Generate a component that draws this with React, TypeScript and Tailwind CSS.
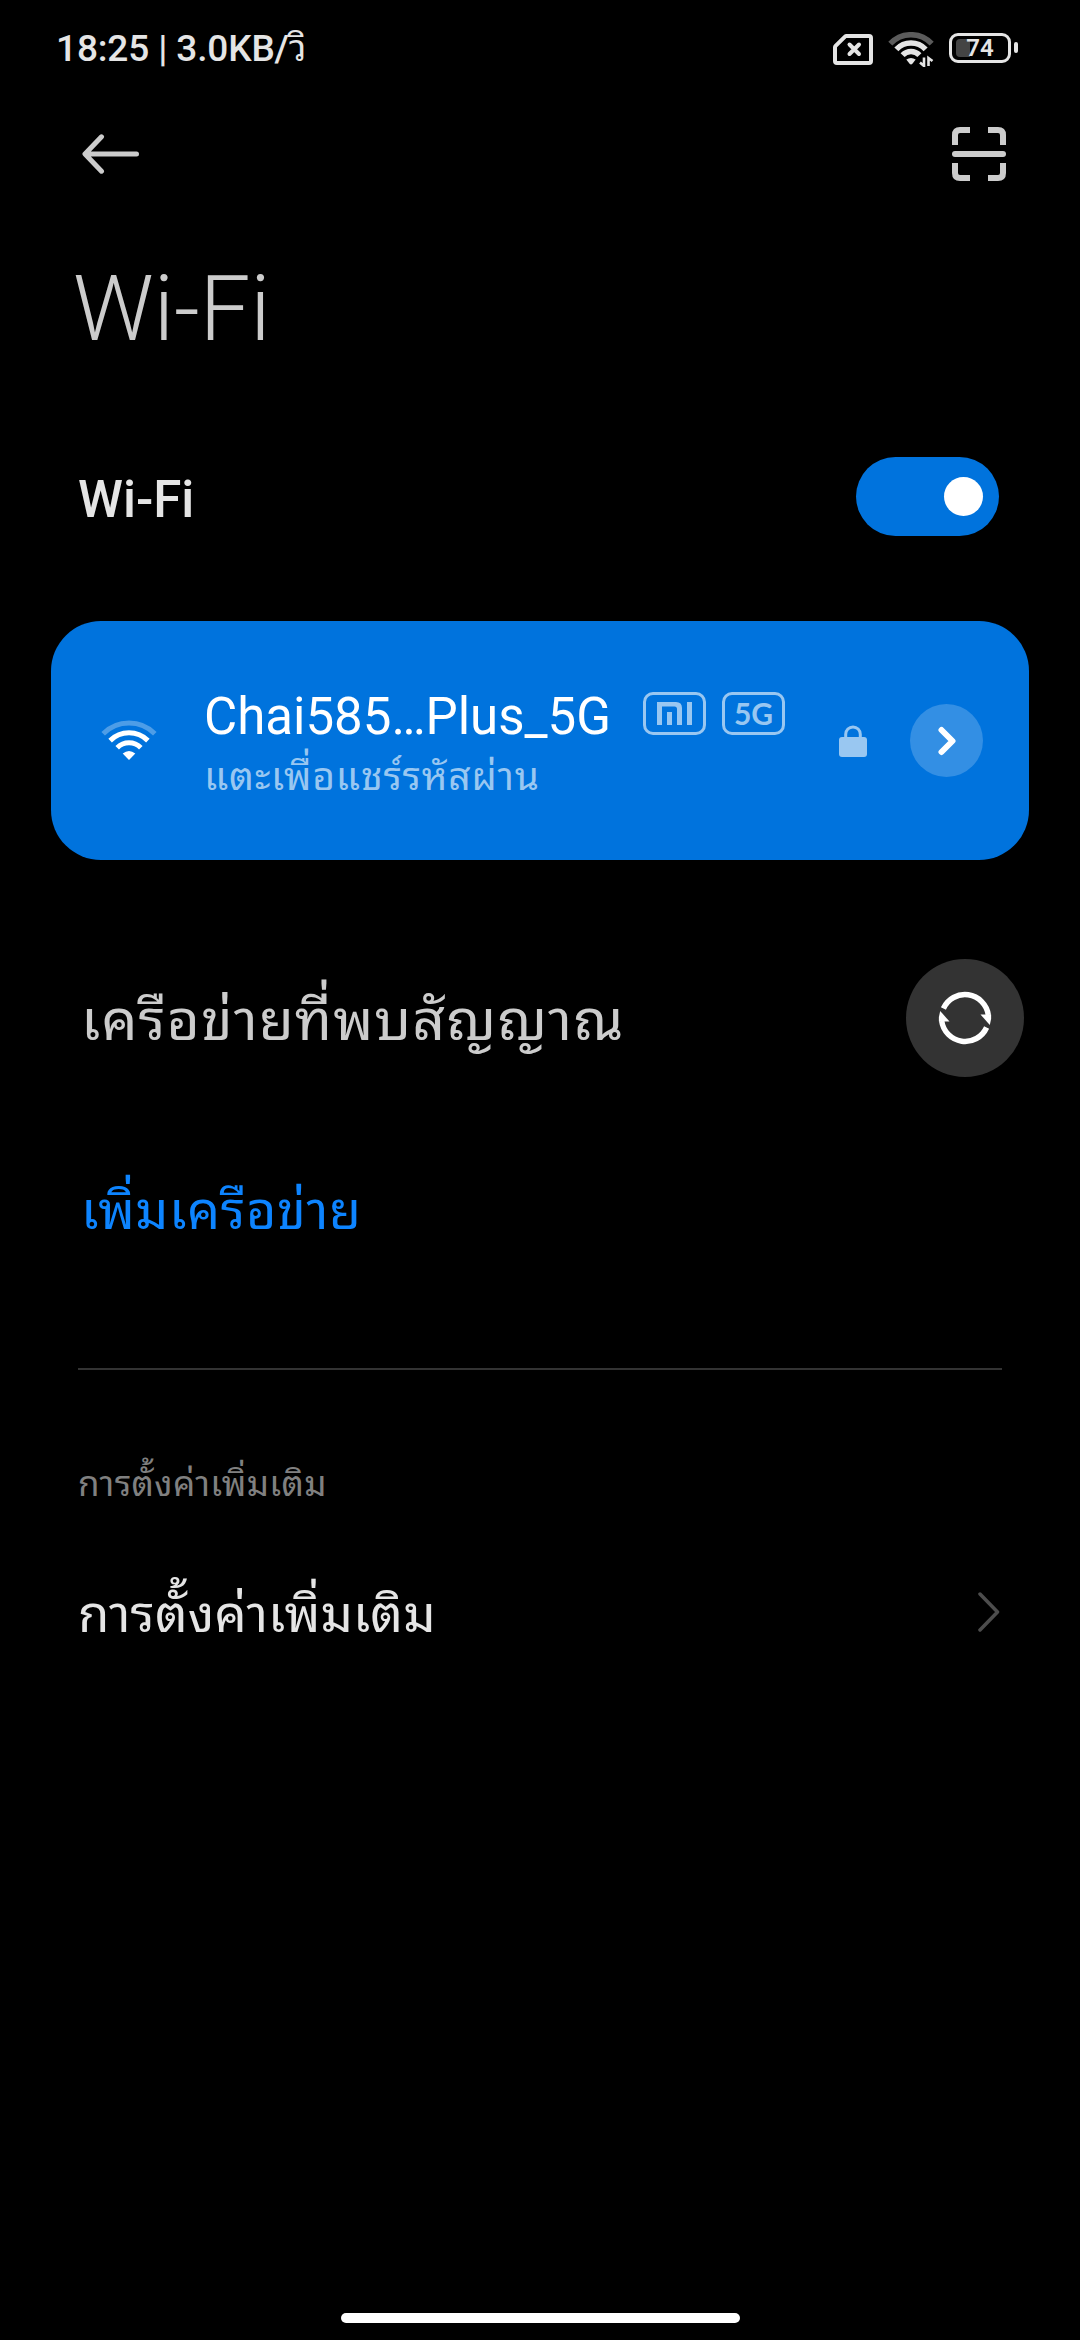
import React from 'react';

const arc = (cx: number, cy: number, r: number, deg = 45) => {
  const a = (deg * Math.PI) / 180;
  const dx = r * Math.sin(a);
  const dy = r * Math.cos(a);
  return `M${cx - dx} ${cy - dy}A${r} ${r} 0 0 1 ${cx + dx} ${cy - dy}`;
};

const SimIcon = () => (
  <svg width="40" height="31" viewBox="0 0 40 31" fill="none" stroke="#e5e5e5">
    <path d="M13.5 2H36Q38 2 38 4V27Q38 29 36 29H4Q2 29 2 27V13.2Q2 12.4 2.6 11.8L12 2.6Q12.6 2 13.5 2Z" strokeWidth="4" strokeLinejoin="round" />
    <path d="M16.5 10.5L26 20M26 10.5L16.5 20" strokeWidth="4" strokeLinecap="round" />
  </svg>
);

const StatusWifiIcon = () => (
  <svg width="47" height="35" viewBox="0 0 47 35" fill="none" stroke="#e5e5e5" strokeWidth="5.5">
    <path d={arc(23, 31, 28.3, 47)} stroke="#5b5b5b" />
    <path d={arc(23, 31, 20, 47)} />
    <path d={arc(23, 31, 11.5, 47)} />
    <path d="M18.3 27.6Q23 24.2 27.7 27.6L24.4 31.8Q23 33.2 21.6 31.8Z" fill="#e5e5e5" stroke="none" />
    <path d="M32 30.5L36 34V25.5M40.5 34V26L44.5 29" strokeWidth="2.6" />
  </svg>
);

const BatteryIcon = () => (
  <div className="mb-[3px] flex items-center gap-[3px]">
    <div className="relative flex h-[30px] w-[62px] items-center justify-center rounded-[9px] border-[3px] border-[#e5e5e5]">
      <div className="absolute left-1 top-[3px] h-[18px] w-[14px] rounded-l-[4px] bg-[#444]" />
      <span className="relative text-[24px] font-semibold leading-none text-[#e5e5e5]">74</span>
    </div>
    <div className="h-[11px] w-1 rounded-[2px] bg-[#e5e5e5]" />
  </div>
);

const BackIcon = () => (
  <svg width="58" height="40" viewBox="0 0 58 40" fill="none" stroke="#ccc" strokeWidth="5" strokeLinecap="round" strokeLinejoin="round">
    <path d="M19.5 2.8L3 20L19.5 37.2M4 20H54.5" />
  </svg>
);

const ScanIcon = () => (
  <svg width="54" height="54" viewBox="0 0 54 54" fill="none" stroke="#ccc" strokeWidth="6">
    <path d="M3 18V8Q3 3 8 3H18M36 3H46Q51 3 51 8V18M51 36V46Q51 51 46 51H36M18 51H8Q3 51 3 46V36" />
    <path d="M3 27H51" strokeLinecap="round" />
  </svg>
);

const WifiIcon = () => (
  <svg width="56" height="41" viewBox="0 0 56 41" fill="none" stroke="#fff" strokeWidth="5">
    <path d={arc(28, 39.5, 36.5)} opacity="0.3" />
    <path d={arc(28, 39.5, 26.7)} />
    <path d={arc(28, 39.5, 16.7)} />
    <path d="M21.7 33.5Q28 28.5 34.3 33.5L28 40Z" fill="#fff" stroke="none" />
  </svg>
);

const MiLogo = () => (
  <svg width="35" height="23" viewBox="0 0 35 23" fill="#99c7f1">
    <path d="M0 0H19Q25 0 25 6V23H20V7Q20 4.5 17.5 4.5H5V23H0Z" />
    <path d="M10 10H15V23H10ZM30 0H35V23H30Z" />
  </svg>
);

const LockIcon = () => (
  <svg width="28" height="32" viewBox="0 0 28 32">
    <path d="M6.7 13V9.2A7.3 7.3 0 0 1 21.3 9.2V13" fill="none" stroke="#99c7f1" strokeWidth="3" />
    <rect y="12" width="28" height="20" rx="3" fill="#99c7f1" />
  </svg>
);

const RefreshIcon = () => (
  <svg width="54" height="54" viewBox="0 0 54 54" fill="none" stroke="#fff" strokeWidth="5.5">
    <path d="M5.4 17.5A23.6 23.6 0 0 1 50.3 24" />
    <path d="M48.6 36.5A23.6 23.6 0 0 1 3.7 30" />
    <path d="M42.5 23.5L53.1 23.5V28L51.8 34Z" fill="#fff" stroke="none" />
    <path d="M11.5 30.5L0.9 30.5V26L2.2 20Z" fill="#fff" stroke="none" />
  </svg>
);

export default function App() {
  return (
    <div className="flex h-[2340px] w-[1080px] flex-col overflow-hidden bg-black font-['Roboto','Noto_Sans_Thai_Looped','Noto_Sans',sans-serif] text-[#e5e5e5]">
      <div className="flex h-[98px] items-center justify-between pl-[56px] pr-[62px]">
        <span className="whitespace-nowrap text-[37px] font-medium leading-[44px] tracking-[-0.15px]">
          18:25 | 3.0KB/<span className="text-[36px] font-normal">วิ</span>
        </span>
        <div className="flex items-center">
          <SimIcon />
          <div className="ml-[15px] mr-[14px]">
            <StatusWifiIcon />
          </div>
          <BatteryIcon />
        </div>
      </div>

      <div className="flex h-[112px] items-center justify-between pl-[82px] pr-[74px]">
        <BackIcon />
        <ScanIcon />
      </div>

      <h1 className="h-[198px] pl-[73px] text-[90px] font-light leading-[200px] text-[#ccc]">Wi-Fi</h1>

      <div className="flex h-[177px] items-center justify-between pl-[78px] pr-[81px]">
        <span className="pt-[6px] text-[51px] font-medium leading-[60px]">Wi-Fi</span>
        <div className="flex h-[79px] w-[143px] items-center justify-end rounded-full bg-[#0073dd] pr-4">
          <div className="h-[39px] w-[39px] rounded-full bg-white" />
        </div>
      </div>

      <div className="mx-[51px] mt-9 flex h-[239px] items-center rounded-[50px] bg-[#0073dd] pl-[50px] pr-[46px]">
        <WifiIcon />
        <div className="ml-[47px] flex-1 pt-3">
          <div className="flex h-[60px] items-center">
            <span className="whitespace-nowrap text-[51px] leading-[60px] text-white">Chai585…Plus_5G</span>
            <div className="mb-[6px] ml-8 flex h-[43px] w-[63px] items-center justify-center rounded-[10px] border-[3px] border-[#99c7f1]">
              <MiLogo />
            </div>
            <div className="mb-[6px] ml-4 flex h-[43px] w-[63px] items-center justify-center rounded-[10px] border-[3px] border-[#99c7f1] pb-[2px] font-['Lato'] text-[30px] font-bold leading-none text-[#99c7f1]">
              5G
            </div>
          </div>
          <div className="h-[60px] whitespace-nowrap text-[39px] leading-[60px] tracking-[0.8px] text-[#99c7f1]">แตะเพื่อแชร์รหัสผ่าน</div>
        </div>
        <LockIcon />
        <div className="ml-[43px] flex h-[73px] w-[73px] items-center justify-center rounded-full bg-[#338fe4]">
          <svg width="18" height="30" viewBox="0 0 18 30" fill="none" stroke="#fff" strokeWidth="6" strokeLinecap="round" strokeLinejoin="round">
            <path d="M3.5 4L14.5 15L3.5 26" />
          </svg>
        </div>
      </div>

      <div className="flex h-[316px] items-center justify-between pl-[81px] pr-14">
        <span className="whitespace-nowrap pt-[5px] text-[57px] leading-[80px] tracking-[1.1px] text-[#ccc]">เครือข่ายที่พบสัญญาณ</span>
        <div className="flex h-[118px] w-[118px] items-center justify-center rounded-full bg-[#333]">
          <RefreshIcon />
        </div>
      </div>

      <div className="h-[192px] whitespace-nowrap pl-[81px] text-[52px] leading-[71px] tracking-[0.65px] text-[#0d84ff]">เพิ่มเครือข่าย</div>

      <div className="mx-[78px] h-[2px] bg-[#333]" />

      <div className="mt-[80px] h-[70px] whitespace-nowrap pl-[78px] text-[35px] leading-[70px] tracking-[0.4px] text-[#808080]">การตั้งค่าเพิ่มเติม</div>

      <div className="mt-[50px] flex h-[84px] items-center justify-between pl-[78px] pr-[80px]">
        <span className="whitespace-nowrap pt-[5px] text-[51px] leading-[84px] tracking-[0.2px]">การตั้งค่าเพิ่มเติม</span>
        <svg width="22" height="42" viewBox="0 0 22 42" fill="none" stroke="#4d4d4d" strokeWidth="3.5" strokeLinecap="round" strokeLinejoin="round">
          <path d="M2 3L19.5 21L2 39" />
        </svg>
      </div>

      <div className="mx-auto mb-[17px] mt-auto h-[10px] w-[399px] rounded-full bg-white" />
    </div>
  );
}
